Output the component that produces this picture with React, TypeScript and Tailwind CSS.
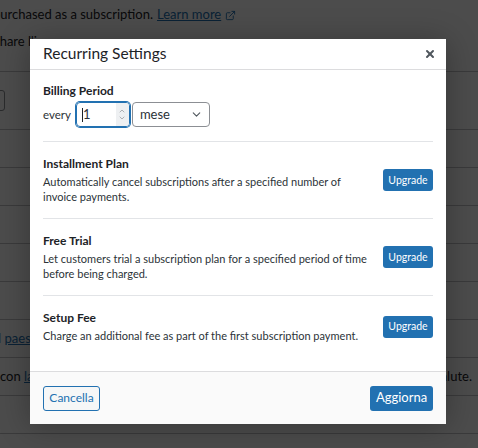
import React from 'react';
import { ExternalLink, X, ChevronDown, ChevronUp } from 'lucide-react';

const font = { fontFamily: 'Lato, "Noto Sans", sans-serif' };

const UpgradeRow: React.FC<{ title: string; text: React.ReactNode; last?: boolean }> = ({ title, text, last }) => (
  <div className={`flex items-center gap-2 pt-[14px] ${last ? 'pb-[28px]' : 'pb-[14px] border-b border-[#e2e4e7]'}`}>
    <div className="flex-1 min-w-0 text-[11px] text-[#2c3338] leading-[15px] whitespace-nowrap">
      <div className="font-bold text-[12px] text-[#1d2327] mb-[3px]">{title}</div>
      <div>{text}</div>
    </div>
    <button className="shrink-0 w-[50px] h-[22px] rounded-[3px] bg-[#2271b1] text-white text-[10.5px] leading-none">
      Upgrade
    </button>
  </div>
);

const App: React.FC = () => {
  return (
    <div className="relative w-[478px] h-[448px] overflow-hidden bg-white text-[#1d2327]" style={font}>
      {/* Page behind the modal */}
      <div className="text-[13px]">
        <div className="h-[30px] flex items-center gap-1 -ml-[7px]">
          <span>purchased as a subscription.</span>
          <span className="text-[#2271b1] underline">Learn more</span>
          <ExternalLink className="w-[11px] h-[11px] text-[#2271b1]" />
        </div>
        <div className="h-[41px] pt-[2px] -ml-[6px]">share l'i</div>
        <div className="border-t border-[#c3c4c7] h-[58px] flex items-center">
          <div className="w-[60px] -ml-[55px] h-[21px] border border-[#8c8f94] rounded-[3px]" />
        </div>
        {[0, 1, 2, 3, 4].map((i) => (
          <div key={i} className="border-t border-[#c3c4c7] h-[38px]" />
        ))}
        <div className="border-t border-[#c3c4c7] h-[38px] flex items-center">
          <span className="-ml-[5px]">il <span className="text-[#2271b1] underline">paese</span></span>
        </div>
        <div className="border-t border-[#c3c4c7] h-[38px] flex items-center justify-between pr-[6px]">
          <span>con <span className="text-[#2271b1] underline">la</span></span>
          <span>salute.</span>
        </div>
        <div className="border-t border-[#c3c4c7] h-[38px]" />
        <div className="border-t border-[#c3c4c7] h-[38px]" />
      </div>

      {/* Backdrop */}
      <div className="absolute inset-0 bg-black/70" />

      {/* Modal */}
      <div className="absolute left-[30px] top-[39px] w-[416px] h-[384px] bg-white shadow-[0_3px_30px_rgba(0,0,0,0.3)] flex flex-col">
        <div className="h-[31px] shrink-0 flex items-center justify-between pl-[13px] pr-[10px] border-b border-[#dcdcde]">
          <h2 className="text-[15.5px] text-[#1d2327] leading-none">Recurring Settings</h2>
          <X className="w-[12px] h-[12px] text-[#50575e]" strokeWidth={4} />
        </div>

        <div className="flex-1 px-[13px]">
          {/* Billing Period */}
          <div className="pt-[13px] pb-[14px] border-b border-[#e2e4e7]">
            <div className="font-bold text-[12px] leading-[15px] text-[#1d2327] mb-[4px]">Billing Period</div>
            <div className="flex items-center gap-[2px] text-[11.5px] text-[#2c3338]">
              <span className="mr-[3px]">every</span>
              <div className="w-[54px] h-[25px] rounded-[4px] border border-[#2271b1] shadow-[0_0_0_1px_#2271b1] flex items-center overflow-hidden">
                <span className="pl-[5px] flex-1 text-[13px] text-[#2c3338] flex items-center"><span className="inline-block w-px h-[14px] bg-[#1d2327]" />1</span>
                <div className="w-[13px] h-full bg-[#eef0f2] flex flex-col items-center justify-center text-[#8c8f94]">
                  <ChevronUp className="w-[8px] h-[8px] -mb-[1px]" strokeWidth={2} />
                  <ChevronDown className="w-[8px] h-[8px]" strokeWidth={2} />
                </div>
              </div>
              <div className="w-[78px] h-[25px] rounded-[4px] border border-[#8c8f94] flex items-center justify-between pl-[7px] pr-[6px] text-[13px] text-[#2c3338]">
                <span>mese</span>
                <ChevronDown className="w-[13px] h-[13px] text-[#50575e]" strokeWidth={2} />
              </div>
            </div>
          </div>

          <UpgradeRow
            title="Installment Plan"
            text={<>Automatically cancel subscriptions after a specified number of<br />invoice payments.</>}
          />
          <UpgradeRow
            title="Free Trial"
            text={<>Let customers trial a subscription plan for a specified period of time<br />before being charged.</>}
          />
          <UpgradeRow
            title="Setup Fee"
            text="Charge an additional fee as part of the first subscription payment."
            last
          />
        </div>

        <div className="h-[53px] shrink-0 border-t border-[#dcdcde] bg-[#fafafa] flex items-center justify-between px-[13px]">
          <button className="w-[57px] h-[25px] rounded-[3px] border border-[#2271b1] text-[#2271b1] text-[12px] bg-[#f6f7f7]">
            Cancella
          </button>
          <button className="w-[63px] h-[25px] rounded-[3px] bg-[#2271b1] text-white text-[13px]">
            Aggiorna
          </button>
        </div>
      </div>
    </div>
  );
};

export default App;
